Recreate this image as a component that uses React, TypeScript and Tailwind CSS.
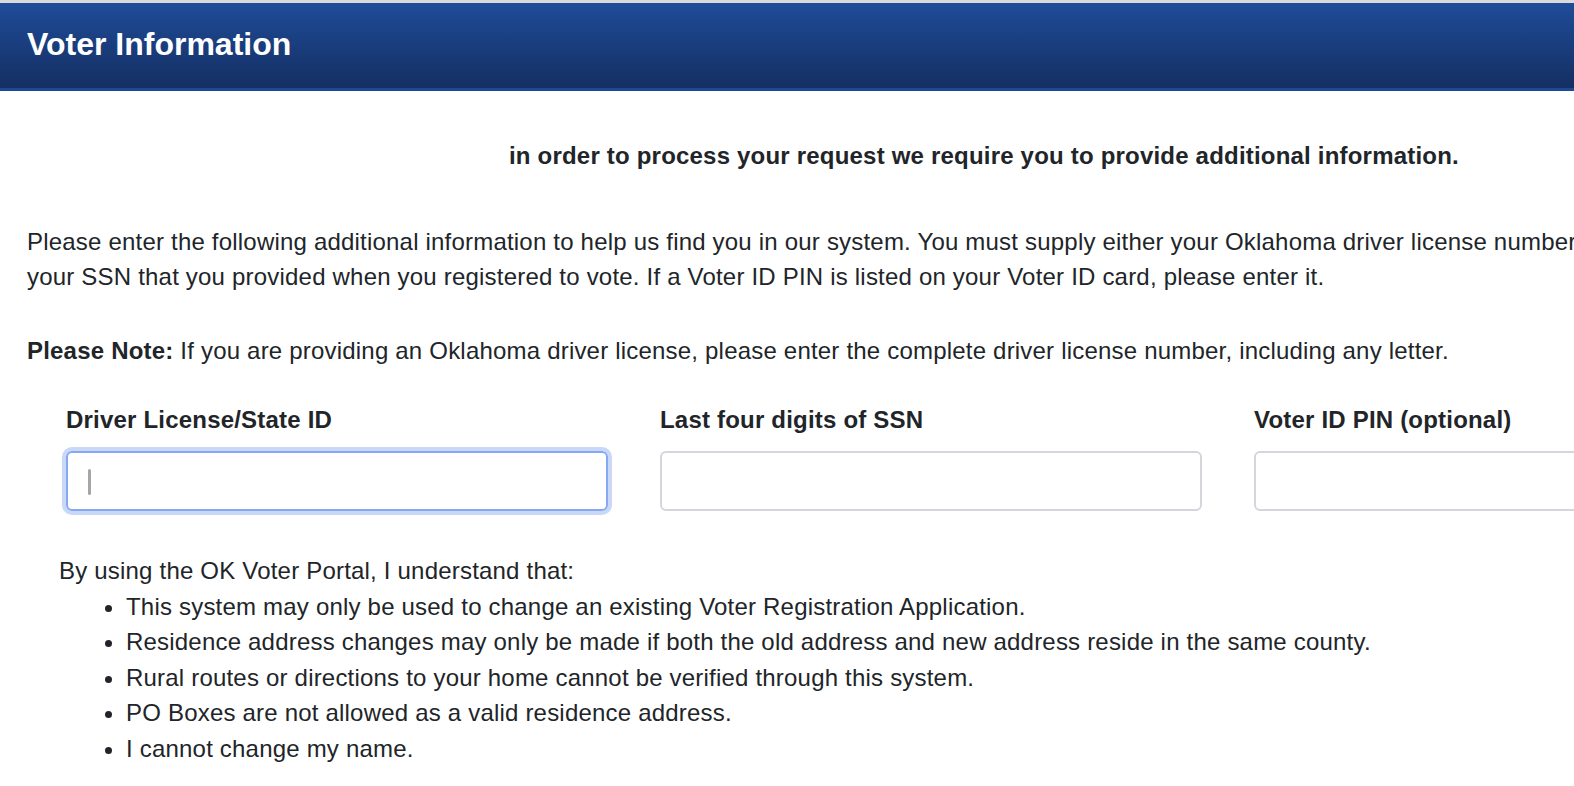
import React from 'react';

const fields = [
  { id: 'dl', label: 'Driver License/State ID', focused: true },
  { id: 'ssn', label: 'Last four digits of SSN', focused: false },
  { id: 'pin', label: 'Voter ID PIN (optional)', focused: false },
];

const rules = [
  'This system may only be used to change an existing Voter Registration Application.',
  'Residence address changes may only be made if both the old address and new address reside in the same county.',
  'Rural routes or directions to your home cannot be verified through this system.',
  'PO Boxes are not allowed as a valid residence address.',
  'I cannot change my name.',
];

export default function App() {
  return (
    <div className="min-h-screen w-full overflow-hidden bg-white text-[#212529] tracking-[0.2px] font-['Liberation_Sans',Arial,sans-serif]">
      {/* header bar */}
      <div className="border-t-[3px] border-[#dadada]">
        <div className="h-[88px] flex items-center pl-[27px] bg-gradient-to-b from-[#1f4c9a] to-[#142f62] border-b-[3px] border-[#1e4a93]">
          <h1 className="text-[32px] font-bold text-white leading-none tracking-normal pb-[4px]">Voter Information</h1>
        </div>
      </div>

      <div className="w-[1900px]">
        <p className="pt-[47px] pl-[509px] text-[24px] leading-[35px] font-bold whitespace-nowrap">
          in order to process your request we require you to provide additional information.
        </p>

        <p className="mt-[51px] pl-[27px] text-[24px] leading-[35px] whitespace-nowrap">
          Please enter the following additional information to help us find you in our system. You must supply either your Oklahoma driver license number or
          <br />
          your SSN that you provided when you registered to vote. If a Voter ID PIN is listed on your Voter ID card, please enter it.
        </p>

        <p className="mt-[39px] pl-[27px] text-[24px] leading-[35px] whitespace-nowrap">
          <span className="font-bold">Please Note:</span> If you are providing an Oklahoma driver license, please enter the complete driver license number, including any letter.
        </p>

        <div className="mt-[34px] ml-[66px] grid grid-cols-[542px_542px_542px] gap-x-[52px]">
          {fields.map((f) => (
            <div key={f.id} className="flex flex-col">
              <label htmlFor={f.id} className="text-[24px] leading-[35px] font-bold whitespace-nowrap">
                {f.label}
              </label>
              <div
                className={
                  f.focused
                    ? 'relative mt-[14px] h-[60px] rounded-[6px] border-2 border-[#86a8f0] ring-4 ring-[#c9d8f8]'
                    : 'relative mt-[14px] h-[60px] rounded-[6px] border-2 border-[#d3d6da]'
                }
              >
                <input id={f.id} type="text" className="w-full h-full bg-transparent outline-none px-[20px] text-[24px]" />
                {f.focused && <span className="absolute left-[20px] top-[16px] w-[3px] h-[26px] rounded-full bg-[#a6a6a6]" />}
              </div>
            </div>
          ))}
        </div>

        <div className="mt-[42px] pl-[59px] text-[24px] leading-[35.6px]">
          <p>By using the OK Voter Portal, I understand that:</p>
          <ul className="list-disc pl-[67px]">
            {rules.map((r) => (
              <li key={r} className="whitespace-nowrap">{r}</li>
            ))}
          </ul>
        </div>
      </div>
    </div>
  );
}
